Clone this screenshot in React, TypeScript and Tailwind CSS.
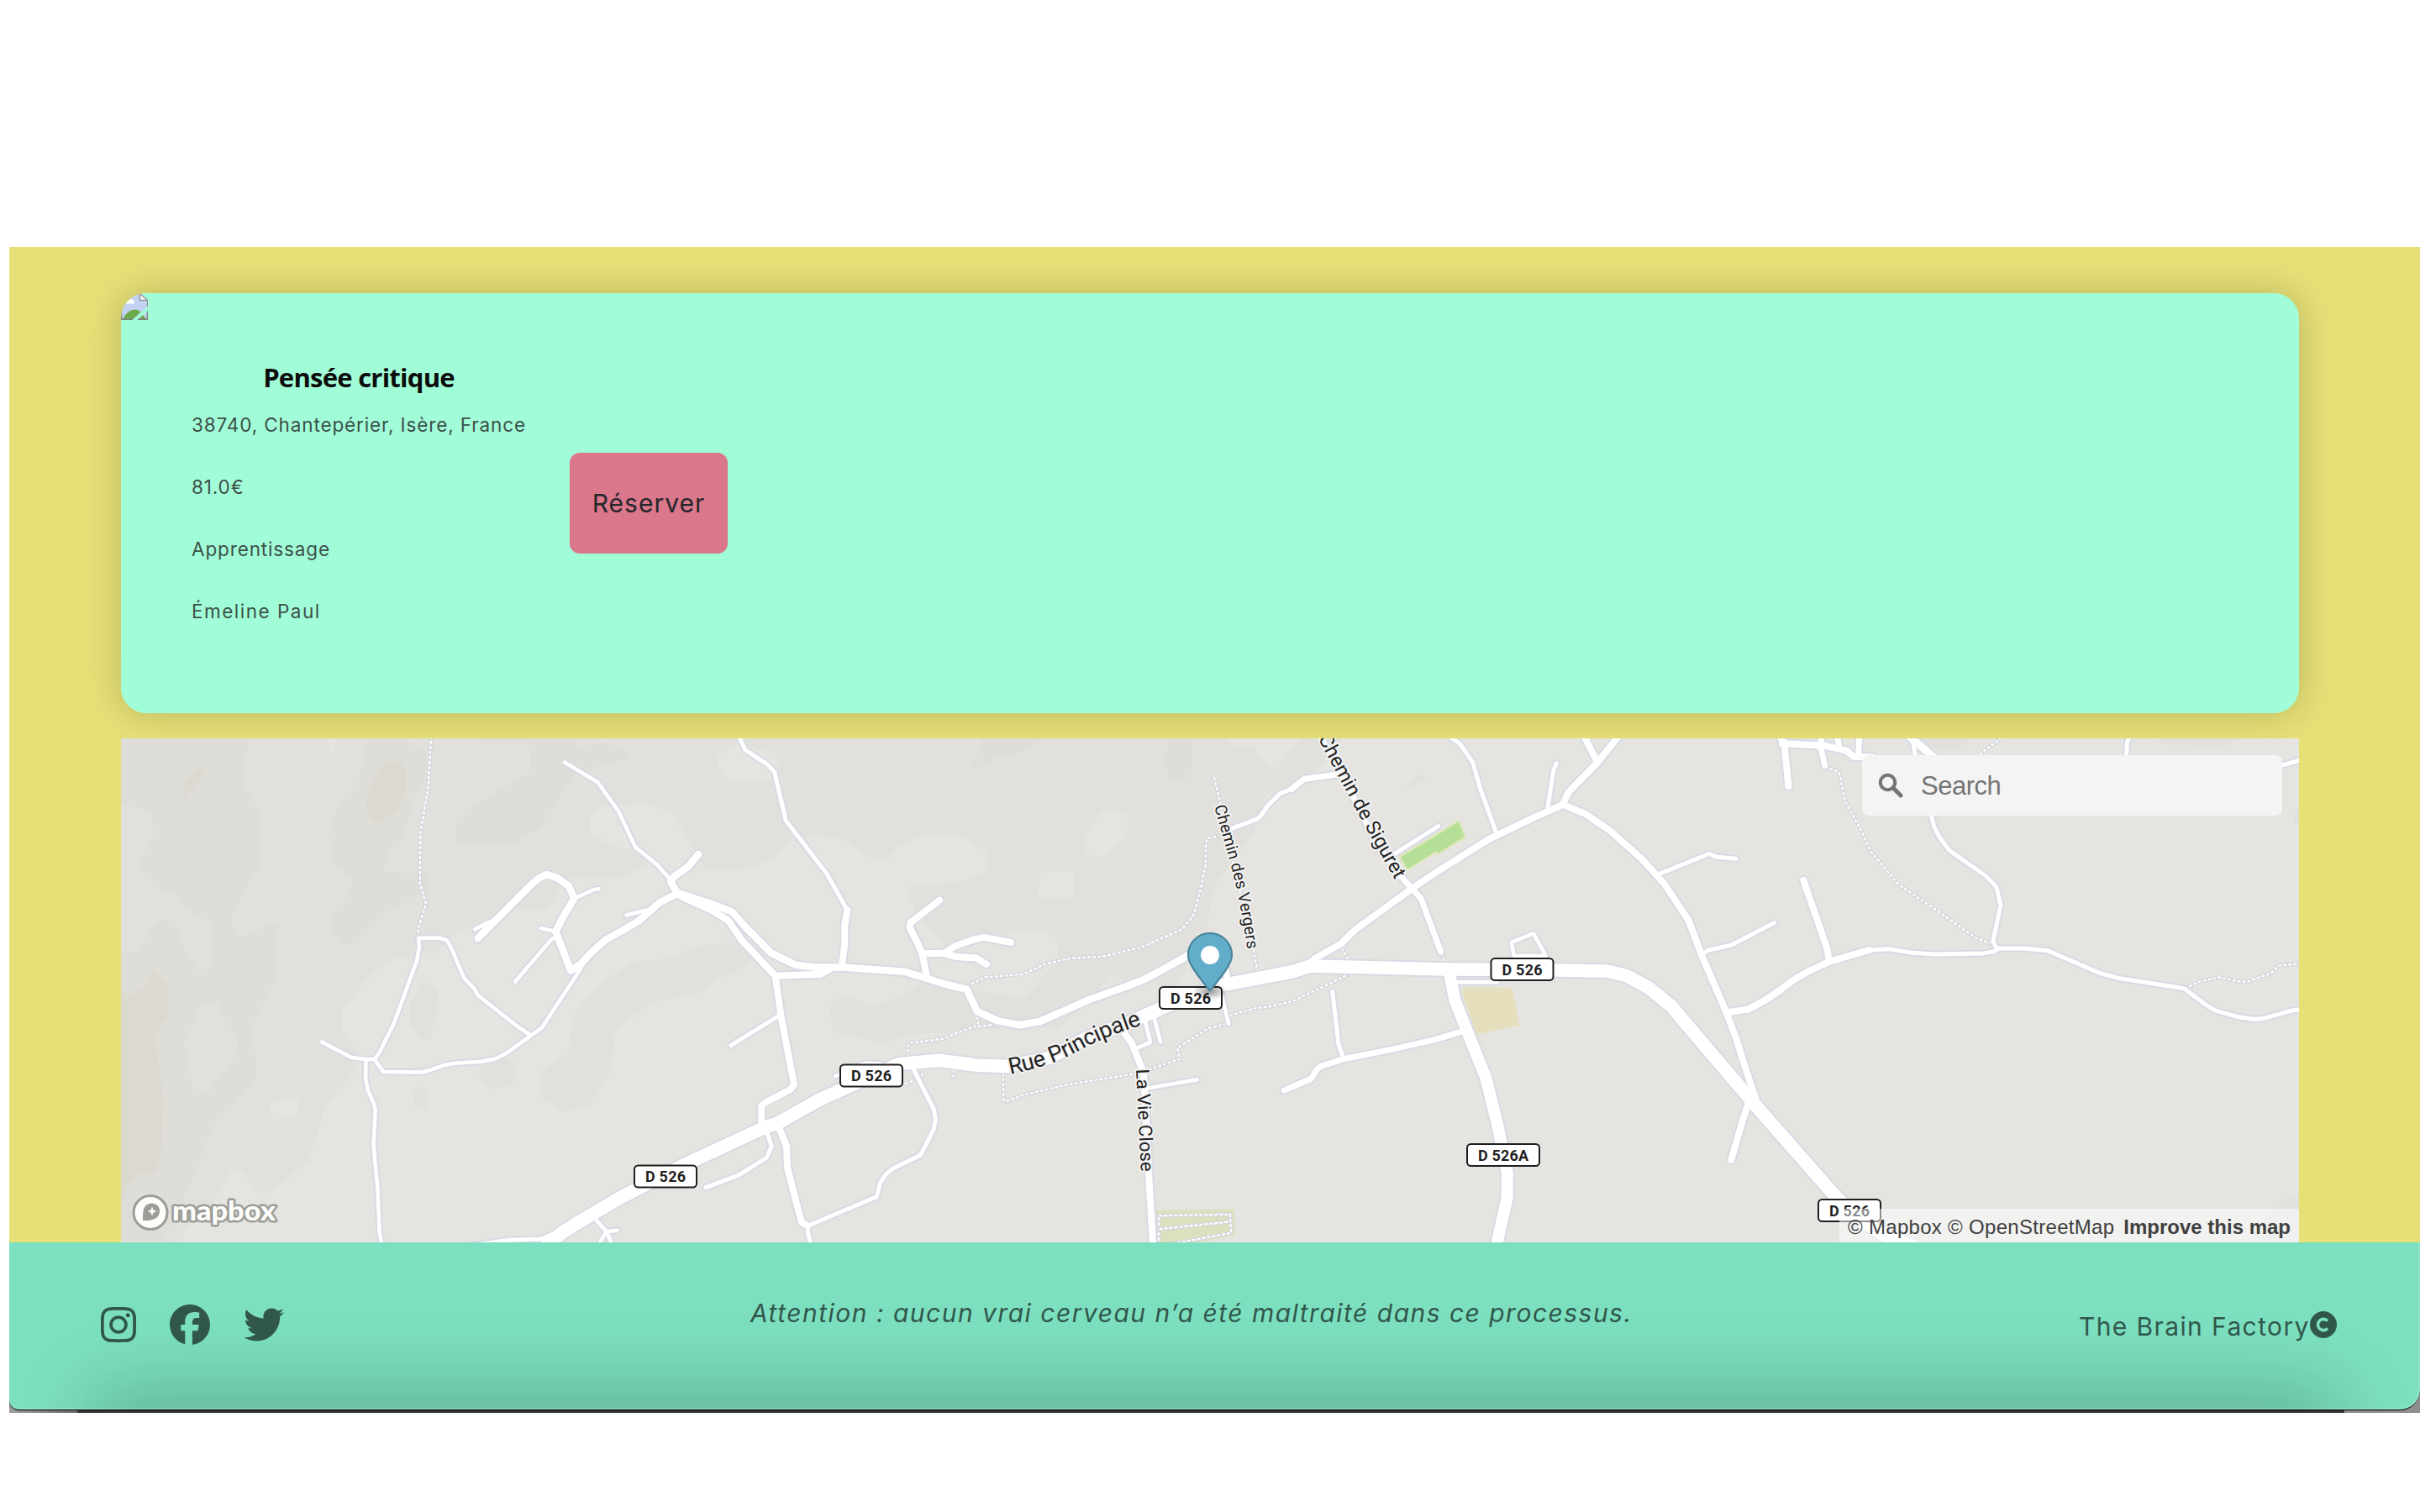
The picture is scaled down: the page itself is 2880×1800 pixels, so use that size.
import React from "react";
import { FaInstagram, FaFacebook, FaTwitter } from "react-icons/fa6";

type TileId = "a" | "b" | "c" | "d";
type Shape = [TileId, string, string];
type Road = [TileId, number, string];

// Each tile has its own origin and scale inside the 2592x600 map.
const TILES: Record<TileId, { ox: number; oy: number; sx: number; sy: number }> = {
  a: { ox: -4, oy: -9, sx: 0.44643, sy: 0.39541 },
  b: { ox: 676, oy: -9, sx: 0.44643, sy: 0.39541 },
  c: { ox: 1256, oy: -9, sx: 0.44643, sy: 0.39541 },
  d: { ox: 1936, oy: -9, sx: 0.5102, sy: 0.39541 },
};

function project(tile: TileId, points: string) {
  const t = TILES[tile];
  return points
    .split(" ")
    .map((p) => {
      const [x, y] = p.split(",").map(Number);
      return (t.ox + x * t.sx).toFixed(1) + "," + (t.oy + y * t.sy).toFixed(1);
    })
    .join(" ");
}

const BASE = "#e5e4e0";
const MID = "#e1e0dc";
const DARK = "#deddd8";
const BROWN = "#dcd9d1";

const LAND: Shape[] = [
  ["a", MID, "0,15 1568,15 1568,430 1540,355 1478,250 1408,219 1288,230 1260,262 1260,310 1325,350 1400,360 1405,405 1345,442 1203,442 1180,475 1143,543 1060,535 905,603 850,665 740,685 680,725 598,838 598,898 634,958 634,1020 553,1130 511,1292 404,1392 374,1392 331,1323 302,1323 250,1430 180,1500 170,1545 0,1545"],
  ["b", MID, "0,15 1750,15 1680,110 1600,180 1540,190 1505,310 1400,465 1375,620 1300,770 1215,760 1120,737 1080,800 985,897 910,890 600,915 515,940 385,905 375,825 405,797 490,825 575,795 640,740 690,650 610,560 582,500 590,472 740,450 795,425 795,370 730,318 628,310 552,352 535,380 490,390 410,322 280,313 240,372 195,400 130,420 45,420 0,335"],
  ["b", BASE, "78,70 130,38 232,70 238,125 218,150 105,150 78,110"],
  ["b", BASE, "1055,315 1100,240 1172,250 1165,320 1102,382 1055,370"],
  ["b", BASE, "937,422 1028,422 1028,502 930,502"],
  ["b", BASE, "690,650 870,605 940,595 980,625 985,690 895,805 750,780 640,740"],
  ["b", DARK, "783,15 952,15 905,58 820,80 754,125"],
  ["b", DARK, "1275,15 1341,15 1341,115 1325,150 1285,150 1270,115"],
  ["c", BASE, "130,15 340,15 268,110 248,110 205,48 150,48"],
  ["c", MID, "645,130 668,138 602,185"],
  ["a", DARK, "0,15 357,15 338,100 338,180 357,190 383,260 383,400 305,550 312,614 357,614 395,584 428,584 420,745 358,895 374,1040 250,1200 200,1350 160,1450 115,1545 0,1545"],
  ["a", MID, "0,220 88,240 96,310 55,412 100,473 152,492 180,535 257,583 257,707 215,723 180,660 152,574 115,565 85,600 53,665 0,665"],
  ["a", MID, "215,835 228,817 268,817 285,875 320,918 320,968 240,1090 205,1080 178,945"],
  ["a", DARK, "667,15 750,15 822,70 825,150 785,210 762,330 722,365 708,422 825,432 832,470 720,545 635,645 598,645 572,600 572,545 615,495 627,440 572,400 563,300 590,220 643,150"],
  ["a", DARK, "950,15 975,38 1085,28 1100,60 1100,125 945,225 903,272 903,341 1056,341 1127,292 1225,120 1360,85 1350,55 1300,38 1228,48 1225,15"],
  ["a", BASE, "567,15 585,15 578,68 563,60"],
  ["a", BROWN, "713,98 753,98 768,115 768,175 743,248 682,278 662,240 670,170"],
  ["a", BROWN, "177,160 222,98 230,138 177,200"],
  ["a", BROWN, "0,780 33,797 72,775 97,716 132,768 132,858 98,915 122,1110 115,1290 97,1332 62,1332 25,1370 10,1440 0,1440"],
  ["a", MID, "815,757 850,775 858,815 832,928 808,928 778,885 778,820"],
  ["a", MID, "795,1070 830,1080 822,1140 788,1130"],
  ["a", MID, "965,1020 1000,980 1064,1000 1060,1040 1045,1070 995,1080 965,1050"],
  ["a", MID, "1720,655 1650,640 1568,645 1540,650 1478,685 1378,695 1272,775 1217,855 1200,968 1127,1030 1127,1103 1190,1150 1255,1130 1315,1030 1325,915 1340,890 1425,817 1560,785 1600,745 1645,730"],
  ["a", BASE, "405,1130 425,1110 482,1110 482,1160 412,1170"],
  ["d", MID, "340,15 530,15 485,57 440,57"],
  ["d", MID, "960,15 1160,15 1110,48 960,38"],
  ["d", MID, "1290,240 1275,250 1275,280 1290,280"],
  ["d", MID, "1290,1405 1258,1405 1210,1470 1150,1545 1290,1545"],
  ["b", "#dbe0bf", "1243,1444 1453,1441 1456,1518 1340,1545 1245,1545"],
  ["c", "#e5dfbd", "768,771 895,774 915,887 801,914 760,784"],
];

const ROADS: Road[] = [
  ["a", 4.5, "1192,95 1280,155 1335,242 1380,350 1437,402 1475,450"],
  ["a", 4.5, "1217,505 1270,478 1283,476"],
  ["a", 4.5, "952,598 990,575 1010,572"],
  ["a", 4.5, "1128,594 1168,605"],
  ["a", 4.5, "1168,620 1155,630 1060,755"],
  ["a", 4.5, "1356,555 1410,540 1430,540"],
  ["a", 4.5, "1235,715 1130,895 1102,917 1038,970 1005,988 970,996 908,1000 873,1006 830,1023 808,1028 709,1027 684,989 660,989 622,983 545,937"],
  ["a", 4.5, "1102,917 1068,892 960,796 953,780 923,744 890,655 877,630 858,624 802,624 804,650 798,690 737,880 697,970 684,989"],
  ["a", 4.5, "662,989 661,1048 667,1082 684,1125 687,1145 682,1245 693,1380 698,1510 705,1550"],
  ["a", 5, "940,1550 1045,1533 1130,1530 1175,1508"],
  ["a", 4.5, "1275,1472 1303,1508 1332,1504"],
  ["a", 4.5, "1288,1535 1303,1508 1320,1550"],
  ["b", 5, "130,10 150,58 210,102 228,125 258,270 367,430 422,540"],
  ["b", 5, "243,855 112,947"],
  ["b", 5, "317,1488 316,1510 328,1555"],
  ["b", 5, "317,1490 500,1403 510,1360 525,1335 545,1317 617,1278 652,1200 657,1170 653,1140 612,1050 595,1010"],
  ["b", 5, "205,1200 220,1250 207,1285 132,1338 45,1375"],
  ["b", 5, "1440,297 1515,265 1525,255 1543,225 1575,190 1610,172"],
  ["b", 4.5, "1420,795 1438,882"],
  ["b", 7, "1430,710 1438,765"],
  ["b", 4.5, "390,1040 470,1000 510,1003"],
  ["b", 4.5, "1215,870 1230,938 1190,957"],
  ["b", 4.5, "1240,865 1257,937"],
  ["b", 4.5, "1225,1075 1355,1050"],
  ["c", 5, "990,230 1005,120 1013,98"],
  ["c", 5, "720,10 755,38 790,95 812,180 852,305"],
  ["c", 5, "580,372 698,287"],
  ["c", 4.5, "750,757 855,757"],
  ["c", 4.5, "900,678 893,637 952,610 985,678 900,678"],
  ["c", 5, "445,985 432,943 416,785"],
  ["c", 5, "1290,430 1420,370 1440,380 1492,385"],
  ["c", 5, "1400,672 1420,660 1480,645 1594,578"],
  ["d", 5, "283,660 330,657 380,668 435,673 550,670 575,665 582,655 645,655 700,662 822,730 862,744 1018,776 1065,822 1090,842 1145,862 1180,868 1200,867 1270,842 1295,838"],
  ["d", 5, "582,658 572,635 590,525 580,470 555,437 470,360 448,322 435,290 425,240"],
  ["d", 5, "883,80 885,35 892,10"],
  ["d", 5, "1235,108 1295,86"],
  ["d", 5, "385,30 392,85"],
  ["a", 8.5, "1548,372 1520,410 1482,440 1474,455 1493,490"],
  ["a", 8.5, "1493,490 1445,517 1390,572 1355,595 1300,630 1262,668 1235,702 1208,722 1168,605 1185,565 1217,505 1203,468 1172,442 1143,433 1125,442 1105,460 1010,568 960,625"],
  ["b", 8, "422,540 415,585 415,640 408,705"],
  ["b", 8, "-20,500 60,540 105,572 140,630 230,738 350,733 380,715"],
  ["b", 8.5, "-30,488 70,525 115,545 150,590 220,670 285,705 335,712 410,712 575,725 690,765 740,778 768,845 820,872 880,886 935,875 1070,808 1165,770 1215,748 1310,690 1350,662 1390,650"],
  ["b", 8, "230,738 245,858 280,1065 270,1080 205,1118 193,1130 193,1195"],
  ["b", 8, "240,1195 260,1250 262,1315 300,1480 317,1490"],
  ["b", 8, "668,510 590,578 588,592 612,645 622,675 635,745"],
  ["b", 8, "625,670 680,670 710,648 760,628 787,622 857,637"],
  ["b", 8, "680,670 710,680 765,684 793,703"],
  ["b", 7, "1607,175 1640,145 1740,130"],
  ["b", 8, "1150,895 1180,940 1212,1030 1225,1330 1237,1550"],
  ["c", 8, "355,700 370,685 440,640 475,600 628,475 690,428 835,325 955,260 1030,222 1045,185 1123,95 1183,10"],
  ["c", 8, "1082,5 1123,95"],
  ["c", 8, "1030,222 1090,250 1155,300 1240,385 1300,460 1365,570 1400,675 1465,845 1490,920 1530,1060 1545,1110"],
  ["c", 8, "1526,1115 1505,1190 1479,1292"],
  ["c", 7, "375,0 450,150 530,330 600,440 628,475 652,505 705,665"],
  ["c", 7, "770,902 690,930 570,960 445,988 385,1010 373,1022 360,1047 287,1083"],
  ["c", 8, "1470,848 1525,838 1568,812 1612,780"],
  ["d", 8, "0,840 42,810 110,748 143,723 190,695 283,660"],
  ["d", 8, "190,695 185,655 130,450"],
  ["d", 8, "95,167 85,40 72,10"],
  ["d", 8, "80,38 180,45 230,60 247,78 290,80"],
  ["d", 7, "180,105 170,50 172,10"],
  ["d", 7, "208,10 213,50"],
  ["d", 7, "260,10 258,78"],
  ["d", 9, "375,15 445,92"],
  ["c", 14, "728,730 742,810 775,905 825,1045 855,1180 882,1330 882,1405 853,1550"],
  ["b", 15.5, "-405,1575 -340,1512 -305,1487 -183,1405 0,1300 200,1195 235,1182 345,1112 470,1048 560,1003 665,992 770,1007 850,1010 960,985 1060,925 1160,885 1250,840 1400,770 1610,725 1655,708 2020,718 2300,720 2450,724 2500,738 2560,775 2620,830 2645,865 2830,1110"],
  ["d", 15.5, "6,1110 200,1395 250,1460 320,1520 400,1560"],
];

const PATHS: [TileId, string][] = [
  ["a", "836,15 828,170 807,310 806,460 822,520 803,590 801,620"],
  ["b", "740,770 790,742 890,733 955,700 1020,684 1100,680 1205,652 1315,597 1345,555 1365,470 1377,405 1378,335 1385,323 1410,317"],
  ["b", "1400,140 1418,225 1450,400 1495,600 1515,722"],
  ["b", "765,845 772,888"],
  ["b", "820,884 755,892 675,928 590,940 583,950 583,980"],
  ["b", "838,1030 838,1110 845,1116 890,1097 1000,1067 1190,1032"],
  ["b", "1225,1020 1308,988 1302,955 1385,895 1440,880"],
  ["b", "1440,857 1510,835 1550,830 1612,813 1755,735 1755,680 1740,655"],
  ["b", "705,1018 705,1048"],
  ["b", "620,1015 622,1045 575,1062"],
  ["b", "1252,1550 1252,1460 1442,1456 1445,1512 1250,1552"],
  ["b", "1240,1502 1442,1478"],
  ["c", "708,670 716,705"],
  ["d", "180,108 213,125 228,215 265,300 285,360 352,463 440,540 530,622 575,645"],
  ["d", "1018,776 1055,755 1100,742 1140,754 1165,756 1220,730 1240,707 1295,700"],
  ["d", "540,72 598,15"],
];

const SHIELDS: [number, number, string][] = [
  [648, 521.5, "D 526"],
  [893, 401.5, "D 526"],
  [1273, 309, "D 526"],
  [1667.5, 275, "D 526"],
  [1645, 496, "D 526A"],
  [2057, 562, "D 526"],
];

const STREETS: { id: string; d: string; size: number; length: number; name: string }[] = [
  { id: "rue", d: "M1058 400 Q1108 390 1140 372 T1222 339", size: 27, length: 168, name: "Rue Principale" },
  { id: "vie", d: "M1208 394 L1214.500 530", size: 22, length: 122, name: "La Vie Close" },
  { id: "vergers", d: "M1301 81 L1320 148 Q1334 200 1342 264", size: 19.5, length: 175, name: "Chemin des Vergers" },
  { id: "siguret", d: "M1424.500 0 L1480.500 105 L1533 198", size: 23.5, length: 192, name: "Chemin de Siguret" },
];

function MapCanvas() {
  return (
    <svg className="block h-full w-full" viewBox="0 0 2592 600" fill="none" strokeLinejoin="round" strokeLinecap="round">
      <rect width="2592" height="600" fill={BASE} />
      {LAND.map(([tile, fill, pts], i) => (
        <polygon key={i} points={project(tile, pts)} fill={fill} />
      ))}
      <polygon
        points={project("c", "595,380 753,271 770,320 697,371 692,365 616,418")}
        fill="#b5df97"
        stroke="#dce8b4"
        strokeWidth="2"
      />
      {PATHS.map(([tile, pts], i) => (
        <g key={i} strokeLinecap="butt">
          <polyline points={project(tile, pts)} stroke="#d5d6dc" strokeWidth="4.5" />
          <polyline points={project(tile, pts)} stroke="#fff" strokeWidth="2.2" strokeDasharray="4 2" />
        </g>
      ))}
      {ROADS.map(([tile, w, pts], i) => (
        <polyline key={i} points={project(tile, pts)} stroke="#d8dae5" strokeWidth={w + 4} />
      ))}
      {ROADS.map(([tile, w, pts], i) => (
        <polyline key={i} points={project(tile, pts)} stroke="#fff" strokeWidth={w} />
      ))}
      {STREETS.map((s) => (
        <g key={s.id}>
          <path id={s.id} d={s.d} />
          <text
            fontFamily="Roboto, sans-serif"
            fontSize={s.size}
            fill="#222"
            stroke="#f2f2f2"
            strokeWidth="4"
            paintOrder="stroke"
            textLength={s.length}
          >
            <textPath href={"#" + s.id} textLength={s.length}>
              {s.name}
            </textPath>
          </text>
        </g>
      ))}
      {SHIELDS.map(([x, y, label], i) => {
        const w = label.length > 5 ? 86 : 74;
        return (
          <g key={i}>
            <rect x={x - w / 2} y={y - 13} width={w} height="26" rx="4.500" fill="#fff" stroke="#1f1f1f" strokeWidth="2" />
            <text
              x={x}
              y={y + 6.5}
              textAnchor="middle"
              fontFamily="Roboto, sans-serif"
              fontWeight="700"
              fontSize="18"
              fill="#1f1f1f"
              textLength={label.length > 5 ? 60 : 48}
            >
              {label}
            </text>
          </g>
        );
      })}
      <defs>
        <radialGradient id="pinShadow">
          <stop offset="0" stopColor="#000" stopOpacity="0.4" />
          <stop offset="1" stopColor="#000" stopOpacity="0" />
        </radialGradient>
      </defs>
      <ellipse cx="1296" cy="301" rx="21" ry="10.500" fill="url(#pinShadow)" />
      <g transform="translate(1269 231) scale(2)">
        <path
          d="M27,13.5C27,19.07 20.25,27 14.75,34C14.02,35.3 12.98,35.3 12.25,34C6.75,27 0,19.22 0,13.5C0,6.04 6.04,0 13.5,0C20.96,0 27,6.04 27,13.5Z"
          fill="#62adca"
        />
        <path
          d="M26.5,13.5C26.500,19 19.800,26.500 14.400,33.700C13.900,34.500 13.100,34.500 12.600,33.700C7.200,26.500 0.500,19 0.500,13.500C0.500,6.300 6.300,0.500 13.500,0.500C20.700,0.500 26.500,6.300 26.500,13.500Z"
          stroke="#498398"
          strokeWidth="1"
        />
        <circle cx="13.500" cy="13.500" r="5.500" fill="#fff" />
      </g>
      <g>
        <circle cx="35" cy="564.500" r="20" fill="#fdfdfc" stroke="#9d9d98" strokeWidth="3" />
        <path d="M26 574 C25.500 562 27 553.500 36.500 553.500 C42.500 553.500 46 557.500 46 562.500 C46 571.500 38 574.500 26 574 Z" fill="#9d9d98" />
        <path d="M37 557.500 L38.600 561.400 L42.500 563 L38.600 564.600 L37 568.500 L35.400 564.600 L31.500 563 L35.400 561.400 Z" fill="#fdfdfc" />
        <text
          x="61"
          y="573.500"
          fontFamily="Lato, sans-serif"
          fontWeight="900"
          fontSize="33"
          fill="#fdfdfc"
          stroke="#9d9d98"
          strokeWidth="5"
          paintOrder="stroke"
          textLength="123"
          lengthAdjust="spacingAndGlyphs"
        >
          mapbox
        </text>
      </g>
    </svg>
  );
}

function BrokenImage() {
  return (
    <svg className="block h-8 w-8" viewBox="0 0 32 32">
      <path d="M0.500 0.500 H22 L31.500 8.500 V16 L14 31.500 H0.500 Z" fill="#c3d2f2" />
      <path d="M31.500 9 V16" stroke="#8e8e93" strokeWidth="1.200" />
      <path d="M22.500 0.500 V8.500 H31.500 Z" fill="#f7f7f7" stroke="#9a9a9e" strokeWidth="1.500" />
      <path d="M0 12.500 V7 H12 Q17 8 16 12.500 Z" fill="#fff" />
      <path d="M2 31 Q8 19.500 16 19.500 Q21 19.500 23.500 22.500 L14 31 Z" fill="#6cab4c" />
      <path d="M0.500 10 V31.300 H14" fill="none" stroke="#808085" strokeWidth="1.500" />
      <path d="M31.500 21.500 V31.500 H20 Z" fill="#c3d2f2" />
      <path d="M26.500 26 L30 31 H20.500 Z" fill="#6cab4c" />
      <path d="M31.500 21.500 V31.300 H20" fill="none" stroke="#808085" strokeWidth="1.500" />
    </svg>
  );
}

function Card() {
  return (
    <section className="flex h-[500px] overflow-hidden rounded-[30px] bg-[#a1fdd8]">
      <div className="w-[84px]">
        <BrokenImage />
      </div>
      <div className="w-[398px] whitespace-nowrap font-['Inter'] text-[22.5px] leading-[36px] tracking-[0.87px] text-[#3c4f48]">
        <h2 className="mt-[80px] text-center font-['Open_Sans'] text-[31px] font-bold leading-[40px] tracking-[-0.75px] text-[#0c0c0c]">
          Pensée critique
        </h2>
        <p className="mt-[19px]">38740, Chantepérier, Isère, France</p>
        <p className="mt-[38px]">81.0€</p>
        <p className="mt-[38px]">Apprentissage</p>
        <p className="mt-[38px] tracking-[1.5px]">Émeline Paul</p>
      </div>
      <button className="ml-[52px] mt-[190px] h-[120px] w-[188px] rounded-[12px] bg-[#da778a] font-['Inter'] text-[30px] tracking-[1px] text-[#24262b]">
        Réserver
      </button>
    </section>
  );
}

function MapPanel() {
  return (
    <section className="relative mt-[30px] h-[600px] overflow-hidden">
      <MapCanvas />
      <div className="absolute right-5 top-5 flex h-[72px] w-[500px] items-center rounded-lg bg-[#f4f4f4] pl-[19px] text-[#757575]">
        <svg className="h-[30px] w-[30px]" viewBox="0 0 30 30" fill="none" stroke="currentColor">
          <circle cx="11.500" cy="11.500" r="8.700" strokeWidth="4" />
          <path d="M18 18 L27 27" strokeWidth="5" strokeLinecap="round" />
        </svg>
        <span className="ml-[21px] mt-[2px] font-['Liberation_Sans'] text-[31px] leading-[36px] tracking-[-0.5px]">Search</span>
      </div>
      <div className="absolute bottom-0 right-0 flex h-10 w-[547px] items-center justify-between whitespace-nowrap bg-white/50 pl-[10px] pr-[10px] pt-[3px] font-['Liberation_Sans'] text-[24px] text-[#404040]">
        <span className="tracking-[0.3px]">© Mapbox © OpenStreetMap</span>
        <span className="font-bold tracking-[0]">Improve this map</span>
      </div>
    </section>
  );
}

function Footer() {
  return (
    <footer className="h-[203px] bg-linear-to-b from-[#e6e077] from-50% to-[#8d8d8d] to-50%">
      <div className="relative h-full">
        <div className="absolute bottom-0 left-0 h-[6px] w-[90px] bg-linear-to-r from-[#9a9a9a] to-[#666]" />
        <div className="absolute bottom-0 left-[81px] right-[90px] h-[4px] rounded-t-[4px] bg-[#383536]" />
        <div className="relative flex h-[200px] items-start overflow-hidden rounded-bl-[12px] rounded-br-[24px] border-b border-black bg-[#7ce0c0] text-[#31574b]">
          <div className="absolute left-[120px] right-[120px] top-full h-10 shadow-[0_0_90px_20px_rgba(0,0,0,0.24)]" />
          <div className="absolute inset-0 rounded-bl-[12px] rounded-br-[24px] border-b-2 border-r-2 border-white/15" />
          <div className="relative ml-[106px] mt-[74px] flex w-[776px] items-center gap-[38px]">
            <FaInstagram className="h-[48px] w-[48px]" />
            <FaFacebook className="-ml-px h-[48px] w-[48px]" />
            <FaTwitter className="ml-[2px] h-[48px] w-[48px]" />
          </div>
          <p className="relative mt-[62px] w-[1581px] whitespace-nowrap font-['Inter'] text-[30px] italic leading-[44px] tracking-[1.48px]">
            Attention : aucun vrai cerveau n’a été maltraité dans ce processus.
          </p>
          <div className="relative mt-[78px] flex items-center whitespace-nowrap font-['Inter'] text-[30px] leading-[44px] tracking-[1.38px]">
            The Brain Factory
            <svg className="-mt-1 h-8 w-8" viewBox="0 0 32 32" fill="none">
              <circle cx="16" cy="16" r="16" fill="#31574b" />
              <path d="M21 11.600 A6.600 6.600 0 1 0 21 20.400" stroke="#7ce0c0" strokeWidth="3.600" />
            </svg>
          </div>
        </div>
      </div>
    </footer>
  );
}

export default function App() {
  return (
    <div className="h-[1800px] w-[2880px] overflow-hidden bg-white pl-[11px] pt-[294px]">
      <main className="h-[1185px] bg-[#e6e077] pl-[133px] pr-[144px] pt-[55px]">
        <div className="rounded-[30px] shadow-[0_0_44px_rgba(0,0,0,0.2)]">
          <Card />
        </div>
        <MapPanel />
      </main>
      <Footer />
    </div>
  );
}
